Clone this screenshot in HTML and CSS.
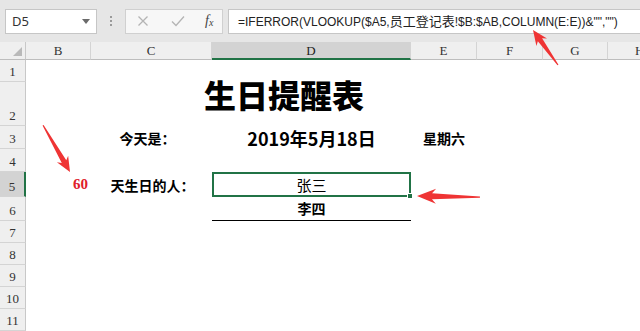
FILE: index.html
```html
<!DOCTYPE html>
<html lang="zh-CN">
<head>
<meta charset="utf-8">
<title>生日提醒表</title>
<link rel="stylesheet" href="styles.css">
</head>
<body>
<div class="app">
  <div class="formula-bar">
    <div class="name-box">
      <span class="name-text">D5</span>
      <svg class="dd" width="8" height="5" viewBox="0 0 8 5"><path d="M0 0H8L4 5Z" fill="#6b6b6b"/></svg>
    </div>
    <div class="grip"><i></i><i></i><i></i></div>
    <div class="fx-box">
      <svg class="ic" width="12" height="12" viewBox="0 0 12 12"><path d="M1.5 1.5L10.5 10.5M10.5 1.5L1.5 10.5" stroke="#b4b4b4" stroke-width="1.3" fill="none"/></svg>
      <svg class="ic" width="14" height="12" viewBox="0 0 14 12"><path d="M1 6.5L5 10.5L13 1.5" stroke="#b4b4b4" stroke-width="1.3" fill="none"/></svg>
      <span class="fx">f<sub>x</sub></span>
    </div>
    <div class="formula"><span class="ftext">=IFERROR(VLOOKUP($A5,<span class="cjk">员工登记表</span>!$B:$AB,COLUMN(E:E))&amp;"","")</span></div>
  </div>

  <div class="sheet">
    <div class="corner"><svg width="9" height="9" viewBox="0 0 9 9"><path d="M9 0V9H0Z" fill="#b9b9b9"/></svg></div>
    <div class="ch c2">B</div>
    <div class="ch c3">C</div>
    <div class="ch c4 sel">D</div>
    <div class="ch c5">E</div>
    <div class="ch c6">F</div>
    <div class="ch c7">G</div>
    <div class="ch c8 last">H</div>

    <div class="rh r1">1</div>
    <div class="rh r2">2</div>
    <div class="rh r3">3</div>
    <div class="rh r4">4</div>
    <div class="rh r5 sel">5</div>
    <div class="rh r6">6</div>
    <div class="rh r7">7</div>
    <div class="rh r8">8</div>
    <div class="rh r9">9</div>
    <div class="rh r10">10</div>
    <div class="rh r11">11</div>

    <div class="cell title">生日提醒表</div>
    <div class="cell today-label">今天是：</div>
    <div class="cell today-date">2019年5月18日</div>
    <div class="cell weekday">星期六</div>
    <div class="cell days">60</div>
    <div class="cell who-label">天生日的人：</div>
    <div class="cell active">张三<span class="handle"></span></div>
    <div class="cell next">李四</div>
  </div>

  <svg class="arrows" width="640" height="331" viewBox="0 0 640 331">
    <g fill="#ef3434">
      <polygon transform="translate(533 30) rotate(234.5)" points="0,0 -15,-6.5 -12,-2.6 -43,-0.6 -43,0.6 -12,2.6 -15,6.5"/>
      <polygon transform="translate(70 172) rotate(60.1)" points="0,0 -15,-6.5 -12,-2.6 -54,-0.6 -54,0.6 -12,2.6 -15,6.5"/>
      <polygon transform="translate(417 196) rotate(181)" points="0,0 -19,-7.5 -15,-3 -63,-0.6 -63,0.6 -15,3 -19,7.5"/>
    </g>
  </svg>
</div>
</body>
</html>
```

FILE: styles.css
```css
* { box-sizing: border-box; }
html, body { margin: 0; padding: 0; background: #fff; }
body { font-family: "Noto Sans CJK SC", "Noto Sans", sans-serif; }

.app {
  position: relative;
  width: 640px;
  height: 331px;
  overflow: hidden;
  background: #fff;
}

/* formula bar */
.formula-bar {
  height: 42px;
  background: #e6e6e6;
  display: flex;
  align-items: center;
  padding: 0 0 0 5px;
}
.name-box {
  width: 92px;
  height: 25px;
  background: #fff;
  border: 1px solid #c6c6c6;
  display: flex;
  align-items: center;
  justify-content: space-between;
  padding: 0 6px 0 6px;
  font-family: "Noto Sans", sans-serif;
  font-size: 13px;
  color: #333;
}
.name-text { line-height: 1; }
.grip {
  width: 28px;
  display: flex;
  flex-direction: column;
  align-items: center;
  gap: 2px;
}
.grip i {
  display: block;
  width: 2px;
  height: 2px;
  background: #9a9a9a;
}
.fx-box {
  width: 98px;
  height: 25px;
  background: #f7f7f7;
  border: 1px solid #d0d0d0;
  display: flex;
  align-items: center;
  padding-left: 11px;
  gap: 22px;
}
.fx {
  font-family: "Liberation Serif", serif;
  font-style: italic;
  font-size: 14px;
  color: #444;
  line-height: 1;
  margin-left: -2px;
}
.fx sub { font-size: 10px; vertical-align: -1px; }
.formula {
  flex: 1;
  margin-left: 5px;
  height: 25px;
  background: #fff;
  border: 1px solid #c6c6c6;
  border-right: none;
  display: flex;
  align-items: center;
  padding-left: 9px;
  white-space: nowrap;
  overflow: hidden;
}
.ftext {
  font-family: "Liberation Sans", "Noto Sans CJK SC", sans-serif;
  font-size: 12px;
  line-height: 16px;
  color: #222;
}
.ftext .cjk {
  font-family: "Noto Sans CJK SC", sans-serif;
  font-size: 13px;
  line-height: 16px;
}

/* sheet grid */
.sheet {
  display: grid;
  grid-template-columns: 26px 65px 121px 199px 66px 66px 65px 32px;
  grid-template-rows: 18px 22px 44px 23px 23px 25px 24px 22px 22px 22px 22px 22px;
}
.corner {
  grid-row: 1;
  grid-column: 1;
  background: #efefef;
  border-right: 1px solid #c8c8c8;
  border-bottom: 1px solid #bdbdbd;
  display: flex;
  align-items: flex-end;
  justify-content: flex-end;
  padding: 0 3px 3px 0;
}
.ch {
  grid-row: 1;
  background: #efefef;
  border-right: 1px solid #d4d4d4;
  border-bottom: 1px solid #bdbdbd;
  font-family: "Liberation Serif", serif;
  font-size: 13px;
  color: #333;
  display: flex;
  align-items: center;
  justify-content: center;
  padding-top: 1px;
}
.c2 { grid-column: 2; }
.c3 { grid-column: 3; }
.c4 { grid-column: 4; }
.c5 { grid-column: 5; }
.c6 { grid-column: 6; }
.c7 { grid-column: 7; }
.c8 { grid-column: 8; justify-content: flex-start; padding-left: 27px; }
.ch.sel {
  background: #d3d3d3;
  border-bottom: 2px solid #217346;
  color: #222;
}
.ch.last { border-right: none; }

.rh {
  grid-column: 1;
  background: #efefef;
  border-right: 1px solid #c8c8c8;
  border-bottom: 1px solid #d4d4d4;
  font-family: "Liberation Serif", serif;
  font-size: 13px;
  color: #333;
  display: flex;
  align-items: flex-end;
  justify-content: center;
  padding-bottom: 1px;
  line-height: 1.2;
}
.rh.sel {
  background: #d3d3d3;
  border-right: 2px solid #217346;
}
.r1 { grid-row: 2; }
.r2 { grid-row: 3; }
.r3 { grid-row: 4; }
.r4 { grid-row: 5; }
.r5 { grid-row: 6; }
.r6 { grid-row: 7; }
.r7 { grid-row: 8; }
.r8 { grid-row: 9; }
.r9 { grid-row: 10; }
.r10 { grid-row: 11; }
.r11 { grid-row: 12; }

.cell {
  display: flex;
  align-items: center;
  justify-content: center;
  color: #000;
  font-weight: 700;
  font-size: 14px;
  white-space: nowrap;
}
.title {
  grid-row: 2 / 4;
  grid-column: 3 / 6;
  font-size: 32px;
  font-weight: 900;
  padding-top: 1px;
}
.today-label { grid-row: 4; grid-column: 3; padding-right: 8px; }
.today-date { grid-row: 4; grid-column: 4; font-size: 18px; }
.weekday { grid-row: 4; grid-column: 5; }
.days {
  grid-row: 6;
  grid-column: 2;
  justify-content: flex-end;
  padding-right: 3px;
  font-family: "Liberation Serif", serif;
  font-size: 15px;
  color: #e0202a;
}
.who-label { grid-row: 6; grid-column: 3; padding-left: 2px; }
.active {
  position: relative;
  grid-row: 6;
  grid-column: 4;
  border: 2px solid #217346;
  font-weight: 400;
  font-size: 15px;
}
.handle {
  position: absolute;
  right: -4px;
  bottom: -4px;
  width: 6px;
  height: 6px;
  background: #217346;
  border: 1px solid #fff;
}
.next {
  grid-row: 7;
  grid-column: 4;
  border-bottom: 1px solid #000;
  padding-bottom: 2px;
}

.arrows {
  position: absolute;
  left: 0;
  top: 0;
  pointer-events: none;
}
```
